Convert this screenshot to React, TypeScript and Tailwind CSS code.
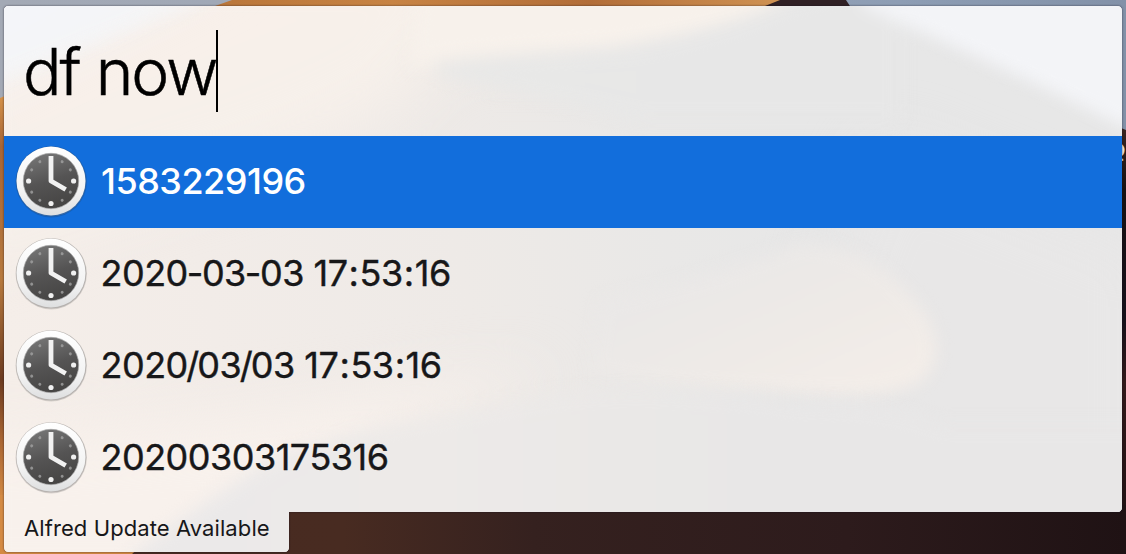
import React from "react";

const results = ["1583229196", "2020-03-03 17:53:16", "2020/03/03 17:53:16", "20200303175316"];

const minorDots = [30, 60, 120, 150, 210, 240, 300, 330];

function Wallpaper() {
  return (
    <svg className="absolute inset-0" width="1126" height="554" viewBox="0 0 1126 554" aria-hidden="true">
      <defs>
        <linearGradient id="sky" x1="0" x2="1" y1="0" y2="0">
          <stop offset="0" stopColor="#a3a9b5" />
          <stop offset="0.2" stopColor="#a0a8b6" />
          <stop offset="0.8" stopColor="#8d9db4" />
          <stop offset="1" stopColor="#8291a8" />
        </linearGradient>
        <linearGradient id="sand" x1="0" x2="1" y1="0" y2="0">
          <stop offset="0" stopColor="#d8934a" />
          <stop offset="0.25" stopColor="#b87438" />
          <stop offset="0.5" stopColor="#c78343" />
          <stop offset="0.75" stopColor="#b26d38" />
          <stop offset="1" stopColor="#d09353" />
        </linearGradient>
        <linearGradient id="leftSand" x1="0" x2="0" y1="0" y2="1">
          <stop offset="0" stopColor="#d39048" />
          <stop offset="0.12" stopColor="#a86535" />
          <stop offset="0.45" stopColor="#b7793d" />
          <stop offset="0.7" stopColor="#6c3b20" />
          <stop offset="0.85" stopColor="#a96532" />
          <stop offset="1" stopColor="#d48a43" />
        </linearGradient>
        <linearGradient id="shade" x1="0" x2="1" y1="0" y2="0">
          <stop offset="0" stopColor="#482a20" />
          <stop offset="0.3" stopColor="#482b21" />
          <stop offset="0.47" stopColor="#35211f" />
          <stop offset="0.75" stopColor="#2d1b1c" />
          <stop offset="1" stopColor="#1f1214" />
        </linearGradient>
        <linearGradient id="rightShade" x1="0" x2="0" y1="0" y2="1">
          <stop offset="0" stopColor="#3b2521" />
          <stop offset="0.15" stopColor="#171113" />
          <stop offset="0.45" stopColor="#15101a" />
          <stop offset="0.6" stopColor="#32191a" />
          <stop offset="1" stopColor="#1c1012" />
        </linearGradient>
      </defs>
      <rect width="1126" height="554" fill="url(#sky)" />
      <path d="M0 98 L215 6 L232 0 H785 L740 80 H4 V98Z" fill="url(#sand)" />
      <rect y="98" width="8" height="402" fill="url(#leftSand)" />
      <path d="M780 0 L765 6 V20 H859 L846 0Z" fill="#302024" />
      <path d="M1116 126 L1126 130 V554 H1116Z" fill="url(#rightShade)" />
      <rect x="8" y="505" width="1118" height="49" fill="url(#shade)" />
      <path d="M0 495 H160 Q144 545 132 554 H0Z" fill="#d48a43" />
    </svg>
  );
}

function FrostedGlass() {
  return (
    <svg
      className="absolute inset-0 drop-shadow-[0_0_1px_rgba(20,15,30,0.6)]"
      width="1126"
      height="554"
      viewBox="0 0 1126 554"
      aria-hidden="true"
    >
      <defs>
        <clipPath id="frame">
          <path d="M9 6 H1117 Q1122 6 1122 11 V507 Q1122 512 1117 512 H289 V547 Q289 552 284 552 H9 Q4 552 4 547 V11 Q4 6 9 6Z" />
        </clipPath>
        <filter id="soft" x="-20%" y="-20%" width="140%" height="140%" colorInterpolationFilters="sRGB">
          <feGaussianBlur stdDeviation="8" />
        </filter>
        <filter id="softer" x="-50%" y="-50%" width="200%" height="200%" colorInterpolationFilters="sRGB">
          <feGaussianBlur stdDeviation="30" />
        </filter>
        <linearGradient id="base" gradientUnits="userSpaceOnUse" x1="0" x2="1000" y1="300" y2="100">
          <stop offset="0" stopColor="#f5eee9" />
          <stop offset="0.2" stopColor="#f2ece8" />
          <stop offset="0.45" stopColor="#eeeae7" />
          <stop offset="0.65" stopColor="#e9e8e7" />
          <stop offset="0.8" stopColor="#e7e7e7" />
          <stop offset="1" stopColor="#e7e7e7" />
        </linearGradient>
        <linearGradient id="topSand" gradientUnits="userSpaceOnUse" x1="250" x2="300" y1="20" y2="150">
          <stop offset="0" stopColor="#f8f0ea" />
          <stop offset="0.6" stopColor="#f6f0ea" />
          <stop offset="1" stopColor="#f6efea" />
        </linearGradient>
        <linearGradient id="lobe" gradientUnits="userSpaceOnUse" x1="780" x2="850" y1="240" y2="400">
          <stop offset="0" stopColor="#eae8e7" />
          <stop offset="0.5" stopColor="#eeeae7" />
          <stop offset="1" stopColor="#f3ede8" />
        </linearGradient>
        <linearGradient id="shadow" gradientUnits="userSpaceOnUse" x1="430" x2="720" y1="60" y2="60">
          <stop offset="0" stopColor="#e8e8e7" />
          <stop offset="1" stopColor="#e7e7e7" />
        </linearGradient>
        <linearGradient id="lower" gradientUnits="userSpaceOnUse" x1="200" x2="760" y1="440" y2="440">
          <stop offset="0" stopColor="#ebe9e9" />
          <stop offset="0.4" stopColor="#edeae8" />
          <stop offset="0.75" stopColor="#eae8e7" />
          <stop offset="1" stopColor="#e8e7e7" />
        </linearGradient>
      </defs>
      <g clipPath="url(#frame)">
        <rect width="1126" height="554" fill="url(#base)" />
        <path d="M880 140 L1160 250 V600 H820 V300Z" fill="#e8e7e7" filter="url(#softer)" />
        <path d="M-60 -60 H620 V50 H430 L420 90 Q330 150 180 190 L-60 270Z" fill="url(#topSand)" filter="url(#softer)" />
        <g filter="url(#soft)">
          <path d="M420 -30 H820 L780 4 Q700 36 610 45 Q500 51 438 58 L410 70Z" fill="#f7f1eb" />
          <path d="M438 64 Q540 54 625 49 Q720 34 790 2 L900 -20 V120 L640 120 Q500 88 438 76Z" fill="url(#shadow)" />
          <path d="M840 -30 L865 8 Q990 60 1126 128 H1190 V-60Z" fill="#f3f4f7" />
          <path d="M600 300 Q710 280 800 242 Q880 245 928 318 Q949 365 915 384 Q890 396 820 395 L690 388 Q610 380 590 370Z" fill="url(#lobe)" />
        </g>
        <path d="M-100 -50 H240 L-100 120Z" fill="#f4f6f9" filter="url(#softer)" />
        <path d="M-50 -50 H270 L195 5 L3 80 L-50 100Z" fill="#f4f6f9" opacity="0.7" filter="url(#soft)" />
        <path d="M-60 440 Q180 435 400 390 L560 370 L400 440 L180 600 H-60Z" fill="#f8f1ec" filter="url(#softer)" />
        <path d="M175 620 L130 555 Q200 505 270 460 Q340 432 450 414 L560 393 Q690 385 800 404 Q900 405 940 425 H1200 V620Z" fill="url(#lower)" filter="url(#soft)" />
      </g>
    </svg>
  );
}

function ClockIcon() {
  return (
    <svg className="h-[76px] w-[76px] shrink-0" viewBox="0 0 76 76" aria-hidden="true">
      <defs>
        <linearGradient id="rim" x1="0" x2="0" y1="0" y2="1">
          <stop offset="0" stopColor="#ffffff" />
          <stop offset="0.65" stopColor="#f3f3f3" />
          <stop offset="1" stopColor="#dedfe0" />
        </linearGradient>
        <linearGradient id="dial" x1="0.3" x2="0.6" y1="0" y2="1">
          <stop offset="0" stopColor="#757575" />
          <stop offset="0.5" stopColor="#555454" />
          <stop offset="1" stopColor="#454443" />
        </linearGradient>
      </defs>
      <circle cx="38.2" cy="38.7" r="35.7" fill="#000000" opacity="0.13" />
      <circle cx="38.2" cy="38.4" r="35.2" fill="#777777" opacity="0.34" />
      <circle cx="38" cy="38" r="34.5" fill="url(#rim)" />
      <circle cx="38" cy="38" r="27.7" fill="url(#dial)" stroke="#a6a6a6" strokeWidth="0.7" />
      {minorDots.map((angle) => (
        <circle key={angle} cx="38" cy="15.7" r="1.5" fill="#a2a2a2" opacity="0.8" transform={`rotate(${angle} 38 38)`} />
      ))}
      <circle cx="15.6" cy="38" r="2.6" fill="#f0f0f0" />
      <circle cx="60.6" cy="38" r="2.6" fill="#f0f0f0" />
      <circle cx="38" cy="60.5" r="2.6" fill="#f0f0f0" />
      <path d="M38 13 V38 L52.7 46.5" fill="none" stroke="#f2f2f2" strokeWidth="4.8" strokeLinejoin="round" />
    </svg>
  );
}

const separatorSpacing: Record<string, string> = {
  "-": "mx-[-1px]",
  "/": "mx-[-1.5px]",
  ":": "mx-[1.1px]",
};

function ResultText({ value }: { value: string }) {
  return (
    <>
      {value.split(/([-/:])/).map((part, index) => (
        <span key={index} className={separatorSpacing[part]}>
          {part}
        </span>
      ))}
    </>
  );
}

export default function App() {
  return (
    <div className="relative h-[554px] w-[1126px] overflow-hidden bg-[#2d1b1c] font-['Inter',sans-serif]">
      <Wallpaper />
      <span className="absolute left-[1109px] top-[138px] font-['Liberation_Sans',sans-serif] text-[21px] leading-6 font-bold text-[#e8e8e8]">Q</span>
      <FrostedGlass />
      <main className="relative flex flex-col px-1 pt-1.5">
        <div className="flex h-[130px] items-start pl-[19px] pt-6">
          <span className="whitespace-pre pt-[2px] text-[64px] leading-[80px] font-light tracking-[-1.97px] text-black [-webkit-text-stroke:0.5px_#000]">df now</span>
          <span className="h-[82px] w-0.5 bg-black" />
        </div>
        <ul className="flex flex-col">
          {results.map((value, index) => (
            <li
              key={value}
              className={`flex h-[92px] items-center pb-0.5 pl-[9px] ${index === 0 ? "bg-[#126edc] text-white" : "text-[#171719]"}`}
            >
              <ClockIcon />
              <span
                className={`whitespace-pre text-[36px] leading-10 tracking-[-0.5px] ${index === 0 ? "ml-3 font-medium" : "ml-[11.5px] font-normal [-webkit-text-stroke:0.4px_#171719]"}`}
              >
                <ResultText value={value} />
              </span>
            </li>
          ))}
        </ul>
        <footer className="flex h-[48px] w-[285px] items-start pl-5 pt-[8px]">
          <span className="text-[22px] leading-8 tracking-[0.09px] whitespace-nowrap text-[#171719]">Alfred Update Available</span>
        </footer>
      </main>
    </div>
  );
}
